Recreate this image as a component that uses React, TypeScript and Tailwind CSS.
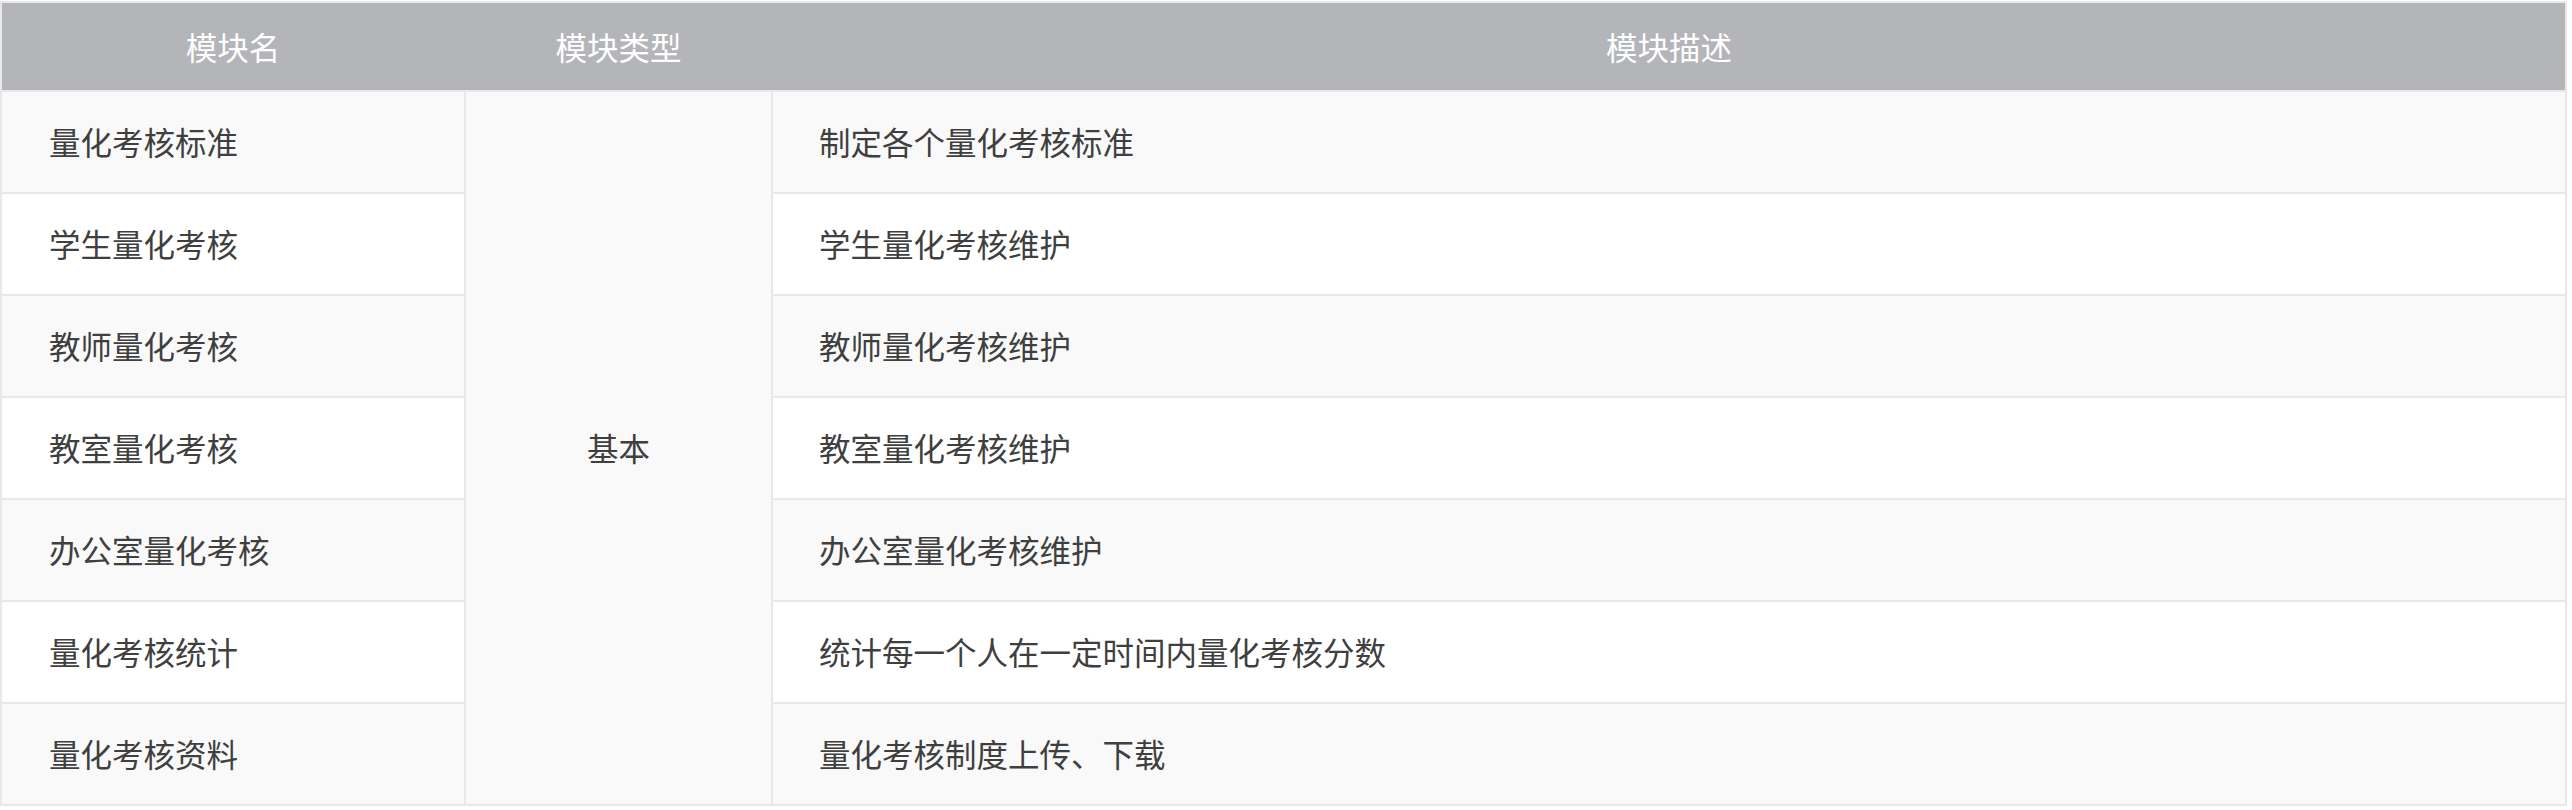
import React from "react";

const rows: { name: string; desc: string }[] = [
  { name: "量化考核标准", desc: "制定各个量化考核标准" },
  { name: "学生量化考核", desc: "学生量化考核维护" },
  { name: "教师量化考核", desc: "教师量化考核维护" },
  { name: "教室量化考核", desc: "教室量化考核维护" },
  { name: "办公室量化考核", desc: "办公室量化考核维护" },
  { name: "量化考核统计", desc: "统计每一个人在一定时间内量化考核分数" },
  { name: "量化考核资料", desc: "量化考核制度上传、下载" },
];

const rowStart = [
  "row-start-1",
  "row-start-2",
  "row-start-3",
  "row-start-4",
  "row-start-5",
  "row-start-6",
  "row-start-7",
];

export default function App() {
  return (
    <div
      className="min-h-screen bg-white pt-[1px]"
      style={{ fontFamily: '"Noto Sans CJK SC", "Noto Sans", sans-serif' }}
    >
      <div className="w-[2567px] bg-[#e8e8e8] p-[2px] flex flex-col gap-[2px]">
        <div className="grid grid-cols-[462px_305px_1fr] gap-[2px] bg-[#b3b5b8] h-[87px] text-white text-[31.5px] leading-none">
          <div className="flex items-center justify-center">模块名</div>
          <div className="flex items-center justify-center">模块类型</div>
          <div className="flex items-center justify-center">模块描述</div>
        </div>
        <div className="grid grid-cols-[462px_305px_1fr] grid-rows-[repeat(7,100px)] gap-[2px] text-[31.5px] leading-none text-[#3f3f3f]">
          {rows.map((r, i) => (
            <div
              key={"n" + i}
              className={`col-start-1 ${rowStart[i]} flex items-center pl-[47px] ${
                i % 2 === 0 ? "bg-[#f9f9f9]" : "bg-white"
              }`}
            >
              {r.name}
            </div>
          ))}
          <div className="col-start-2 row-start-1 row-span-7 flex items-center justify-center bg-[#f9f9f9]">
            基本
          </div>
          {rows.map((r, i) => (
            <div
              key={"d" + i}
              className={`col-start-3 ${rowStart[i]} flex items-center pl-[46px] ${
                i % 2 === 0 ? "bg-[#f9f9f9]" : "bg-white"
              }`}
            >
              {r.desc}
            </div>
          ))}
        </div>
      </div>
    </div>
  );
}
